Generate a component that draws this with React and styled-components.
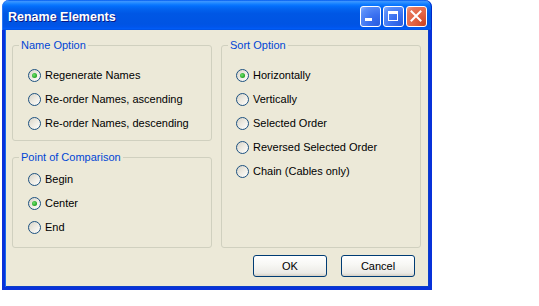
import React from 'react'
import styled, { createGlobalStyle } from 'styled-components'

const GlobalStyle = createGlobalStyle`
  body {
    margin: 0;
    background: #fff;
    font-family: "Liberation Sans", Arial, sans-serif;
  }
`

const nameOptions = [
  { label: 'Regenerate Names', checked: true },
  { label: 'Re-order Names, ascending' },
  { label: 'Re-order Names, descending' }
]

const pointOptions = [
  { label: 'Begin' },
  { label: 'Center', checked: true },
  { label: 'End' }
]

const sortOptions = [
  { label: 'Horizontally', checked: true },
  { label: 'Vertically' },
  { label: 'Selected Order' },
  { label: 'Reversed Selected Order' },
  { label: 'Chain (Cables only)' }
]

const App = () => (
  <>
    <GlobalStyle />
    <Window>
      <TitleBar>
        <Title>Rename Elements</Title>
        <Controls>
          <CaptionButton>
            <svg width='21' height='21' viewBox='0 0 21 21'>
              <rect x='5' y='12' width='7' height='3' fill='#fff' />
            </svg>
          </CaptionButton>
          <CaptionButton>
            <svg width='21' height='21' viewBox='0 0 21 21'>
              <rect x='5.5' y='5.5' width='9' height='9' fill='none' stroke='#fff' />
              <rect x='5' y='5' width='10' height='3' fill='#fff' />
            </svg>
          </CaptionButton>
          <CaptionButton close>
            <svg width='21' height='21' viewBox='0 0 21 21'>
              <path d='M5.5 5.5 L14.5 14.5 M14.5 5.5 L5.5 14.5' stroke='#fff' strokeWidth='2' strokeLinecap='square' />
            </svg>
          </CaptionButton>
        </Controls>
      </TitleBar>
      <Client>
        <Columns>
          <Column>
            <Group pb={5}>
              <Legend>Name Option</Legend>
              {nameOptions.map((o) => (
                <Option key={o.label} {...o} />
              ))}
            </Group>
            <Group pt={3} pb={8}>
              <Legend>Point of Comparison</Legend>
              {pointOptions.map((o) => (
                <Option key={o.label} {...o} />
              ))}
            </Group>
          </Column>
          <Group pb={5}>
            <Legend>Sort Option</Legend>
            {sortOptions.map((o) => (
              <Option key={o.label} {...o} indent={14} />
            ))}
          </Group>
        </Columns>
        <Footer>
          <PushButton>OK</PushButton>
          <PushButton>Cancel</PushButton>
        </Footer>
      </Client>
    </Window>
  </>
)

const Option = ({ label, checked, indent }) => (
  <Row indent={indent}>
    <Radio>{checked && <Dot />}</Radio>
    <span>{label}</span>
  </Row>
)

const Window = styled.div`
  margin-left: 2px;
  width: 430px;
  height: 290px;
  display: flex;
  flex-direction: column;
`

const TitleBar = styled.div`
  height: 30px;
  box-sizing: border-box;
  padding: 3px 5px 0 6px;
  display: flex;
  align-items: center;
  justify-content: space-between;
  border-radius: 7px 7px 0 0;
  background: linear-gradient(
    to bottom,
    #0058ee 0%,
    #3a93ff 5%,
    #288eff 9%,
    #127dff 14%,
    #036ffc 20%,
    #0262ee 30%,
    #0057e5 45%,
    #0054e3 80%,
    #0055eb 90%,
    #005bf5 95%,
    #0050e0 100%
  );
  box-shadow: inset 1px 0 0 #2a77f5, inset -1px 0 0 #0028c8;
`

const Title = styled.span`
  color: #fff;
  font-weight: bold;
  font-size: 12.5px;
  text-shadow: 1px 1px 0 #0a1883;
  padding-top: 1px;
`

const Controls = styled.div`
  display: flex;
  gap: 2px;
`

const CaptionButton = styled.div`
  width: 21px;
  height: 21px;
  box-sizing: border-box;
  border: 1px solid #fff;
  border-radius: 3px;
  display: flex;
  align-items: center;
  justify-content: center;
  background: ${(p) =>
    p.close
      ? 'radial-gradient(circle at 90% 90%, #cc4626 0%, #e06040 40%, #e7775a 80%, #f0a08a 100%)'
      : 'radial-gradient(circle at 90% 90%, #2b5fe0 0%, #3a70f0 40%, #5a8ef8 80%, #8fb4ff 100%)'};
  svg {
    margin: -1px;
  }
`

const Client = styled.div`
  flex: 1;
  background: #ece9d8;
  border: 3px solid #0831d9;
  border-top: none;
  box-shadow: inset 1px 0 0 #166aee, inset -1px 0 0 #0a3fc8, inset 0 -1px 0 #0a3fc8;
  padding: 9px 6px 0 7px;
  display: flex;
  flex-direction: column;
`

const Columns = styled.div`
  display: grid;
  grid-template-columns: 200px 200px;
  gap: 9px;
`

const Column = styled.div`
  display: flex;
  flex-direction: column;
  gap: 10px;
`

const Group = styled.fieldset`
  margin: 0;
  min-width: 0;
  padding: ${(p) => p.pt ?? 11}px 0 ${(p) => p.pb}px 0;
  border: 1px solid #d0d0bf;
  border-radius: 3px;
  display: flex;
  flex-direction: column;
`

const Legend = styled.legend`
  margin-left: 6px;
  padding: 0 2px;
  font-size: 11px;
  line-height: 13px;
  color: #0046d5;
`

const Row = styled.div`
  height: 24px;
  display: flex;
  align-items: center;
  gap: 4px;
  padding-left: ${(p) => p.indent ?? 15}px;
  font-size: 11px;
  color: #000;
`

const Radio = styled.div`
  width: 13px;
  height: 13px;
  box-sizing: border-box;
  border: 1px solid #1c5180;
  border-radius: 50%;
  background: linear-gradient(135deg, #d6d3c9 0%, #ece9e0 45%, #ffffff 100%);
  display: flex;
  align-items: center;
  justify-content: center;
`

const Dot = styled.div`
  width: 5px;
  height: 5px;
  border-radius: 50%;
  background: radial-gradient(circle at 40% 40%, #6ee36e 0%, #21a121 70%);
`

const Footer = styled.div`
  margin-top: 7px;
  padding-right: 8px;
  display: flex;
  justify-content: flex-end;
  gap: 14px;
`

const PushButton = styled.div`
  width: 74px;
  height: 22px;
  box-sizing: border-box;
  border: 1px solid #003c74;
  border-radius: 3px;
  background: linear-gradient(to bottom, #ffffff 0%, #f8f8f5 40%, #ecebe6 85%, #d6d0c5 100%);
  display: flex;
  align-items: center;
  justify-content: center;
  font-size: 11px;
  color: #000;
`

export default App
